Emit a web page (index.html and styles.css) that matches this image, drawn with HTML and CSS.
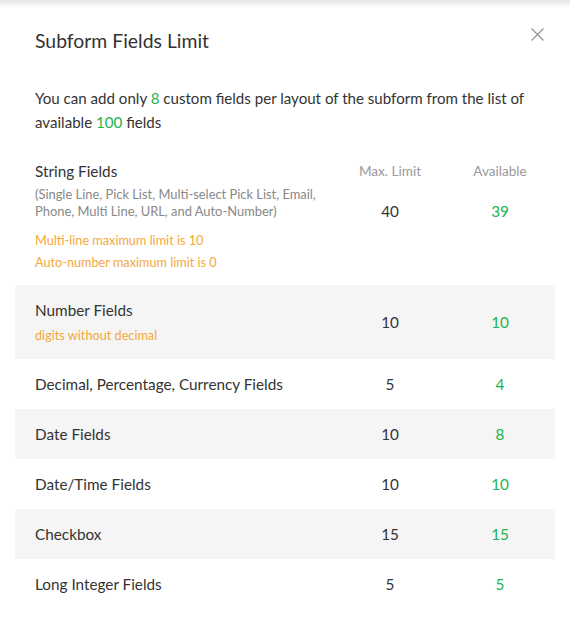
FILE: index.html
```html
<!DOCTYPE html>
<html lang="en">
<head>
<meta charset="utf-8">
<title>Subform Fields Limit</title>
<link rel="stylesheet" href="styles.css">
</head>
<body>
<div class="top-shadow"></div>
<div class="modal">
  <div class="modal-head">
    <h1 class="modal-title">Subform Fields Limit</h1>
    <button class="close" aria-label="Close">
      <svg width="13" height="13" viewBox="0 0 13 13"><path d="M0.5 0.5 L12.5 12.5 M12.5 0.5 L0.5 12.5" stroke="#909090" stroke-width="1.1" fill="none"/></svg>
    </button>
  </div>
  <p class="intro">You can add only <span class="green">8</span> custom fields per layout of the subform from the list of available <span class="green">100</span> fields</p>

  <div class="table">
    <div class="row row-first">
      <div class="label">String Fields</div>
      <div class="head">Max. Limit</div>
      <div class="head">Available</div>
      <div class="details">
        <div class="desc">(Single Line, Pick List, Multi-select Pick List, Email, Phone, Multi Line, URL, and Auto-Number)</div>
        <div class="note note-first">Multi-line maximum limit is 10</div>
        <div class="note">Auto-number maximum limit is 0</div>
      </div>
      <div class="val val-top">40</div>
      <div class="val val-top green">39</div>
    </div>
    <div class="row alt row-num">
      <div class="label-block">
        <div class="label">Number Fields</div>
        <div class="note">digits without decimal</div>
      </div>
      <div class="val">10</div>
      <div class="val green">10</div>
    </div>
    <div class="row">
      <div class="label">Decimal, Percentage, Currency Fields</div>
      <div class="val">5</div>
      <div class="val green">4</div>
    </div>
    <div class="row alt">
      <div class="label">Date Fields</div>
      <div class="val">10</div>
      <div class="val green">8</div>
    </div>
    <div class="row">
      <div class="label">Date/Time Fields</div>
      <div class="val">10</div>
      <div class="val green">10</div>
    </div>
    <div class="row alt">
      <div class="label">Checkbox</div>
      <div class="val">15</div>
      <div class="val green">15</div>
    </div>
    <div class="row">
      <div class="label">Long Integer Fields</div>
      <div class="val">5</div>
      <div class="val green">5</div>
    </div>
  </div>
</div>
</body>
</html>
```
FILE: styles.css
```css
* { box-sizing: border-box; }
html, body {
  margin: 0;
  padding: 0;
  background: #ffffff;
}
body {
  font-family: Lato, "Liberation Sans", sans-serif;
  color: #333333;
  width: 570px;
  height: 620px;
  overflow: hidden;
  position: relative;
}
.top-shadow {
  height: 8px;
  background: linear-gradient(to bottom, #e6e6e6, #ffffff);
}
.modal {
  padding: 0 15px;
}
.modal-head {
  display: flex;
  justify-content: space-between;
  align-items: flex-start;
  padding: 21px 11px 0 20px;
}
.modal-title {
  margin: 0;
  font-size: 19.4px;
  font-weight: 400;
  line-height: 24px;
  color: #333;
}
.close {
  border: 0;
  background: none;
  padding: 0;
  margin-top: -1px;
  width: 13px;
  height: 13px;
  display: block;
  cursor: pointer;
}
.close svg { display: block; }
.intro {
  margin: 33px 0 0;
  padding: 0 20px;
  font-size: 15.1px;
  line-height: 24px;
  color: #333;
}
.green { color: #1db34f; }
.table {
  margin-top: 20px;
}
.row {
  display: grid;
  grid-template-columns: 1fr 110px 110px;
  align-items: center;
  height: 50px;
  padding-left: 20px;
}
.row.alt { background: #f5f5f5; }
.row-first {
  height: auto;
  align-items: start;
  padding-top: 7px;
  padding-bottom: 14px;
}
.row-num {
  height: 74px;
}
.label {
  font-size: 15.3px;
  line-height: 20px;
  color: #333;
}
.head {
  text-align: center;
  font-size: 13.6px;
  line-height: 20px;
  color: #9a9a9a;
}
.details {
  padding-top: 5px;
  padding-right: 10px;
}
.desc {
  font-size: 12.9px;
  line-height: 17px;
  color: #888888;
}
.note {
  font-size: 12.7px;
  line-height: 18px;
  color: #f3a83b;
}
.note-first { margin-top: 11px; }
.note + .note { margin-top: 4px; }
.label-block .note { margin-top: 6px; }
.val {
  text-align: center;
  font-size: 15.3px;
  line-height: 20px;
  color: #333;
}
.val.green { color: #1db34f; }
.val-top { padding-top: 20px; }
```
